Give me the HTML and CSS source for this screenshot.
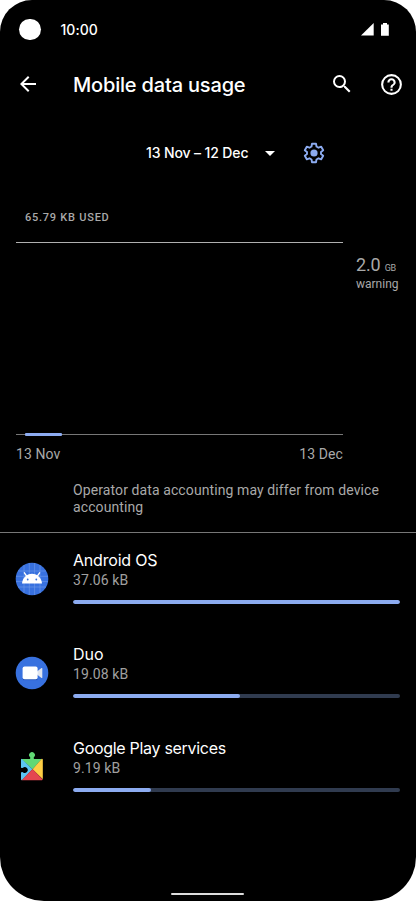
FILE: index.html
```html
<!DOCTYPE html>
<html lang="en">
<head>
<meta charset="utf-8">
<title>Mobile data usage</title>
<link rel="stylesheet" href="styles.css">
</head>
<body>
<div class="phone">
  <div class="status">
    <span class="camera"></span>
    <span class="time">10:00</span>
    <svg class="signal" width="28" height="13" viewBox="0 0 28 13" fill="#fff"><path d="M0 12.5 12.7 0v12.5z"/><path d="M20 1.500h2V0h4v1.500h1.800v11.300H20z"/></svg>
  </div>
  <header class="appbar">
    <svg class="back" width="24" height="24" viewBox="0 0 24 24"><path fill="#fff" d="M20 11H7.830l5.590-5.590L12 4l-8 8 8 8 1.410-1.410L7.830 13H20z"/></svg>
    <h1 class="title">Mobile data usage</h1>
    <svg class="search" width="24" height="24" viewBox="0 0 24 24"><path fill="#fff" d="M15.500 14h-.79l-.28-.27A6.470 6.470 0 0 0 16 9.500 6.500 6.500 0 1 0 9.500 16c1.610 0 3.090-.59 4.230-1.570l.27.28v.79l5 4.990L20.490 19zm-6 0a4.500 4.500 0 1 1 0-9 4.500 4.500 0 0 1 0 9z"/></svg>
    <svg class="help" width="25" height="25" viewBox="0 0 24 24"><path fill="#fff" d="M11 18h2v-2h-2zm1-16a10 10 0 1 0 0 20 10 10 0 0 0 0-20zm0 18a8 8 0 1 1 0-16 8 8 0 0 1 0 16zm0-14a4 4 0 0 0-4 4h2a2 2 0 1 1 4 0c0 2-3 1.750-3 5h2c0-2.250 3-2.500 3-5a4 4 0 0 0-4-4z"/></svg>
  </header>
  <div class="period">
    <span class="range">13 Nov – 12 Dec</span>
    <svg class="caret" width="10" height="5" viewBox="0 0 10 5"><path fill="#fff" d="M0 0h10L5 5z"/></svg>
    <svg class="gear" width="24" height="24" viewBox="0 0 24 24"><path fill="none" stroke="#8cabf0" stroke-width="1.900" stroke-linejoin="round" d="M10 2.700h4l.5 2.800 2 1.200 2.700-1 2 3.500-2.200 1.700v2.200l2.200 1.700-2 3.500-2.700-1-2 1.200-.5 2.800h-4l-.5-2.800-2-1.200-2.700 1-2-3.500L5 13.100v-2.200L2.800 9.200l2-3.500 2.700 1 2-1.200z"/><circle cx="12" cy="12" r="3.600" fill="#8cabf0"/></svg>
  </div>
  <p class="used">65.79 KB USED</p>
  <section class="chart">
    <div class="plot"><span class="series"></span></div>
    <div class="limit"><div class="amount">2.0 <small>GB</small></div><div class="warning">warning</div></div>
  </section>
  <div class="dates"><span>13 Nov</span><span>13 Dec</span></div>
  <p class="note">Operator data accounting may differ from device accounting</p>
  <ul class="apps">
    <li class="app">
      <svg class="icon" width="34" height="34" viewBox="0 0 34 34"><circle cx="17" cy="17" r="16.300" fill="#3871df"/><path d="M9 3v28M14.300 1v32M19.600 1v32M25 3v28M3 9h28M1 14.300h32M1 19.600h32M3 25h28" stroke="#709bea" stroke-width=".6"/><path d="m9.400 10.800 2.800 4M24.600 10.800l-2.800 4" stroke="#fff" stroke-width="1.400" stroke-linecap="round"/><path fill="#fff" d="M7 21.400c.4-5.200 4.400-9.700 10-9.700s9.600 4.500 10 9.700z"/><circle cx="12.700" cy="17.500" r=".9" fill="#3871df"/><circle cx="21.300" cy="17.500" r=".9" fill="#3871df"/></svg>
      <div class="body"><div class="name os">Android OS</div><div class="size">37.06 kB</div><div class="track"><div class="fill" style="width:100%"></div></div></div>
    </li>
    <li class="app">
      <svg class="icon" width="34" height="34" viewBox="0 0 34 34"><circle cx="17" cy="17" r="16.300" fill="#3871df"/><path d="M8 23.500h14.500" stroke="#2858b8" stroke-width="1.200"/><path fill="#e1e6ef" d="m22 15.500 4.500-3.400q.8-.5.800.4v9q0 .9-.8.4L22 18.500z"/><rect x="7.600" y="10.400" width="15" height="12.800" rx="2" fill="#fff"/></svg>
      <div class="body"><div class="name duo">Duo</div><div class="size">19.08 kB</div><div class="track"><div class="fill" style="width:51%"></div></div></div>
    </li>
    <li class="app">
      <svg class="icon" width="34" height="34" viewBox="0 0 34 34"><path fill="#61d875" d="M6.200 9h8.600q1-.8.100-2a2.900 2.900 0 1 1 4.200 0q-.9 1.200.1 2h7.700L17.500 19.200z"/><path fill="#5bc5f4" d="M6.500 8.800 17.500 19.200 7 30.200q-1 0-1-1v-6.700q.8-.9 1.900-.3a2.900 2.900 0 1 0 0-4.400Q6.800 18.500 6 17.600V9.800q0-.7.500-1z"/><path fill="#ffce45" d="M26.800 8.800q1 0 1 1v19.500L17.500 19.200z"/><path fill="#e44650" d="m17.500 19 10.200 10.400q-.1.800-.9.800H6.700z"/></svg>
      <div class="body"><div class="name play">Google Play services</div><div class="size">9.19 kB</div><div class="track"><div class="fill" style="width:24%"></div></div></div>
    </li>
  </ul>
  <div class="home"></div>
</div>
</body>
</html>
```
FILE: styles.css
```css
* { box-sizing: border-box; }
body { margin: 0; background: #fff; }
h1, p, ul { margin: 0; padding: 0; }
svg { display: block; flex: none; }

.phone {
  width: 416px;
  height: 901px;
  overflow: hidden;
  display: flex;
  flex-direction: column;
  background: #000;
  border-radius: 32px 32px 44px 44px;
  color: #fff;
  font-family: Roboto, "Liberation Sans", sans-serif;
}

.status { display: flex; align-items: center; height: 59px; padding: 0 27px 0 19px; }
.camera { width: 21.5px; height: 21.5px; border-radius: 50%; background: #fff; }
.time { flex: 1; margin-left: 20px; font: 500 14px/20px Inter, sans-serif; letter-spacing: .05px; }

.appbar { display: flex; align-items: center; height: 50px; padding: 0 12px 0 16px; }
.title { flex: 1; margin-left: 33px; padding-top: 2px; font: 500 20px/28px Inter, sans-serif; letter-spacing: -.18px; white-space: nowrap; }
.help { margin-left: 25px; }

.period { display: flex; align-items: center; height: 88px; padding-left: 146px; }
.range { width: 103px; font: 500 14px/20px Inter, sans-serif; letter-spacing: -.12px; white-space: nowrap; }
.caret { margin-left: 16px; }
.gear { margin-left: 27px; }

.used { height: 45px; padding: 13px 25px 0; font-size: 11px; line-height: 16px; font-weight: 500; letter-spacing: .76px; color: #a9a9a9; }

.chart { display: flex; height: 192.5px; }
.plot { display: flex; align-items: flex-end; width: 327px; margin-left: 16px; border-top: 1px solid #b0b0b0; border-bottom: 1px solid #777; }
.series { width: 37px; height: 3px; margin: 0 0 -2px 9px; border-radius: 1px; background: #8cabf0; }
.limit { padding: 13px 0 0 13px; color: #a9a9a9; }
.amount { font-size: 18px; line-height: 20px; letter-spacing: -.2px; }
.amount small { font-size: 9px; }
.warning { margin-top: -2px; font-size: 12px; line-height: 16px; }

.dates { display: flex; justify-content: space-between; width: 327px; height: 47.5px; margin-left: 16px; padding-top: 10.5px; font-size: 14px; line-height: 18px; letter-spacing: .1px; color: #a9a9a9; }
.note { height: 51px; padding: 0 30px 0 73px; font-size: 14px; line-height: 17px; letter-spacing: .1px; color: #a9a9a9; border-bottom: 1px solid #777; }

.apps { list-style: none; }
.app { display: flex; height: 94.2px; padding: 16px 16px 0 15px; }
.icon { margin-top: 13px; }
.body { flex: 1; margin-left: 24px; }
.name { font: 400 16px/22px Inter, sans-serif; letter-spacing: -.3px; white-space: nowrap; }
.os { letter-spacing: -.2px; }
.duo { letter-spacing: 0; }
.size { margin-top: 1px; font-size: 14px; line-height: 17px; letter-spacing: .1px; color: #a0a0a0; }
.track { height: 4px; margin-top: 10.5px; border-radius: 2px; background: #303b4f; overflow: hidden; }
.fill { height: 100%; border-radius: 2px; background: #8cabf0; }

.home { width: 73px; height: 2px; margin: auto 0 6px 171px; border-radius: 1px; background: #ddd; }
```
